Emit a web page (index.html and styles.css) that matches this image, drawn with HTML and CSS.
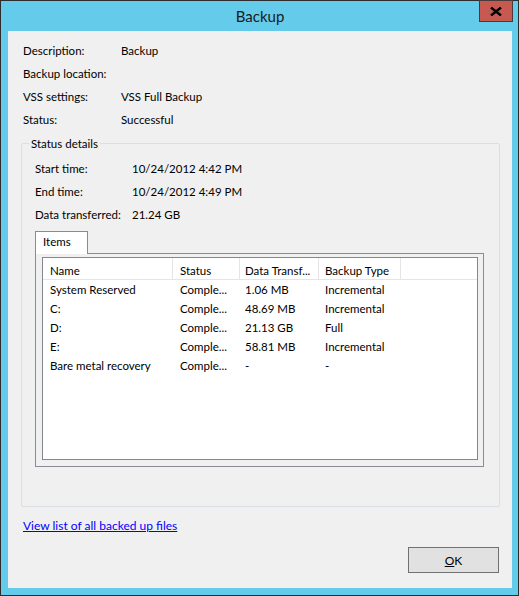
FILE: index.html
```html
<!DOCTYPE html>
<html lang="en">
<head>
  <meta charset="UTF-8">
  <title>Backup</title>
  <link rel="stylesheet" href="styles.css">
</head>
<body>
  <div class="window">
    <div class="titlebar">
      <span class="title">Backup</span>
      <button class="close" title="Close">
        <svg width="12" height="9" viewBox="0 0 12 9"><path d="M1 0.5 L11 8.5 M11 0.5 L1 8.5" stroke="#000" stroke-width="2.4"/></svg>
      </button>
    </div>

    <div class="content">
      <div class="info">
        <span>Description:</span><span>Backup</span>
        <span>Backup location:</span><span></span>
        <span>VSS settings:</span><span>VSS Full Backup</span>
        <span>Status:</span><span>Successful</span>
      </div>

      <fieldset class="group">
        <legend>Status details</legend>
        <div class="details">
          <span>Start time:</span><span>10/24/2012 4:42 PM</span>
          <span>End time:</span><span>10/24/2012 4:49 PM</span>
          <span>Data transferred:</span><span>21.24 GB</span>
        </div>

        <div class="tabs">
          <div class="tab">Items</div>
        </div>
        <div class="tabpanel">
          <div class="listview">
            <div class="row head">
              <span class="c-name">Name</span>
              <span class="c-status">Status</span>
              <span class="c-data">Data Transf...</span>
              <span class="c-type">Backup Type</span>
            </div>
            <div class="row">
              <span class="c-name">System Reserved</span>
              <span class="c-status">Comple...</span>
              <span class="c-data">1.06 MB</span>
              <span class="c-type">Incremental</span>
            </div>
            <div class="row">
              <span class="c-name">C:</span>
              <span class="c-status">Comple...</span>
              <span class="c-data">48.69 MB</span>
              <span class="c-type">Incremental</span>
            </div>
            <div class="row">
              <span class="c-name">D:</span>
              <span class="c-status">Comple...</span>
              <span class="c-data">21.13 GB</span>
              <span class="c-type">Full</span>
            </div>
            <div class="row">
              <span class="c-name">E:</span>
              <span class="c-status">Comple...</span>
              <span class="c-data">58.81 MB</span>
              <span class="c-type">Incremental</span>
            </div>
            <div class="row">
              <span class="c-name">Bare metal recovery</span>
              <span class="c-status">Comple...</span>
              <span class="c-data">-</span>
              <span class="c-type">-</span>
            </div>
          </div>
        </div>
      </fieldset>

      <a class="filelink" href="#">View list of all backed up files</a>

      <div class="buttons">
        <button class="ok"><u>O</u>K</button>
      </div>
    </div>
  </div>
</body>
</html>
```

FILE: styles.css
```css
* {
  box-sizing: border-box;
}
body {
  margin: 0;
  font-family: Lato, "Liberation Sans", sans-serif;
  font-size: 11.5px;
  color: #000;
  background-color: #fff;
}
.window {
  width: 519px;
  height: 596px;
  border: 1px solid #2d2d2d;
  background-color: #65cbea;
  padding: 0 6px 7px 7px;
  display: flex;
  flex-direction: column;
}
.titlebar {
  position: relative;
  height: 30px;
  display: flex;
  align-items: center;
  justify-content: center;
}
.title {
  font-size: 15px;
  color: #1a1a1a;
}
.close {
  position: absolute;
  top: -1px;
  right: -1px;
  width: 34px;
  height: 22px;
  background-color: #c75a50;
  border: 1px solid #4a3a3a;
  padding: 0;
  display: flex;
  align-items: center;
  justify-content: center;
}
.content {
  flex: 1;
  background-color: #f0f0f0;
  padding: 8px 12px 0 15px;
  display: flex;
  flex-direction: column;
}
.info {
  display: grid;
  grid-template-columns: 98px 1fr;
  line-height: 23px;
}
.group {
  margin: 5px 0 0 -2px;
  border: 1px solid #d9dfe4;
  border-radius: 2px;
  padding: 0 15px 39px 13px;
}
.group legend {
  padding: 0 2px;
  margin-left: -6px;
  line-height: 15px;
}
.details {
  display: grid;
  grid-template-columns: 97px 1fr;
  line-height: 23px;
  margin-top: 6px;
}
.tabs {
  display: flex;
  margin-top: 5px;
}
.tab {
  width: 53px;
  height: 23px;
  border: 1px solid #898c95;
  border-bottom: none;
  background-color: #fff;
  padding: 3px 0 0 7px;
  margin-bottom: -1px;
  position: relative;
  z-index: 1;
}
.tabpanel {
  border: 1px solid #898c95;
  background-color: #f0f0f0;
  padding: 3px 5px 6px 6px;
  height: 214px;
}
.listview {
  border: 1px solid #828790;
  background-color: #fff;
  height: 203px;
}
.row {
  display: flex;
  height: 19px;
  line-height: 19px;
}
.row span {
  padding-left: 7px;
  white-space: nowrap;
  overflow: hidden;
}
.row.head {
  height: 22px;
  line-height: 16px;
  border-bottom: 1px solid #e5e5e5;
}
.row.head span {
  border-right: 1px solid #e5e5e5;
  padding-top: 5px;
}
.c-name {
  width: 130px;
}
.c-status {
  width: 67px;
}
.c-data {
  width: 79px;
  padding-left: 5px !important;
}
.c-type {
  width: 82px;
  padding-left: 6px !important;
}
.filelink {
  margin-top: 11px;
  color: #0000ff;
  font-size: 12px;
  line-height: 16px;
  align-self: flex-start;
}
.buttons {
  display: flex;
  justify-content: flex-end;
  margin-top: 13px;
  padding-right: 1px;
}
.ok {
  width: 91px;
  height: 26px;
  background-color: #e1e1e1;
  border: 1px solid #707070;
  font-family: inherit;
  font-size: 12px;
  color: #000;
  padding: 0;
}
```
